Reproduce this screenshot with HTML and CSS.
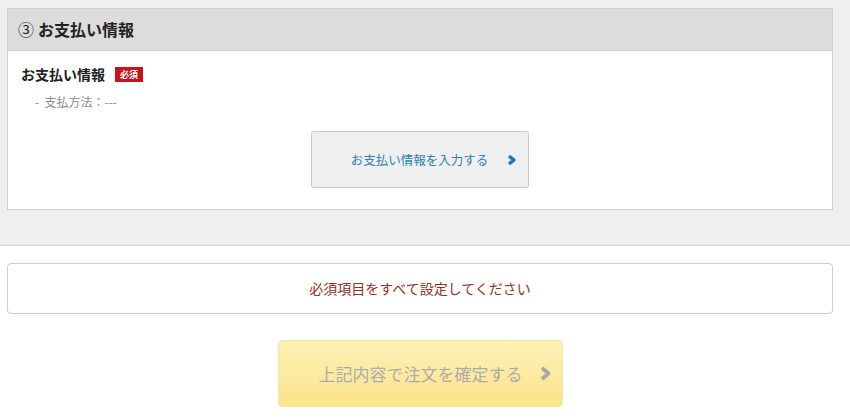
FILE: index.html
```html
<!DOCTYPE html>
<html lang="ja">
<head>
    <meta charset="UTF-8">
    <title>お支払い情報</title>
    <link rel="stylesheet" href="styles.css">
</head>
<body>
    <div class="section">
        <div class="wrap card">
            <div class="card-head"><span class="num">③</span>お支払い情報</div>
            <div class="card-body">
                <div class="label-row">
                    <span class="label">お支払い情報</span>
                    <span class="badge">必須</span>
                </div>
                <p class="detail">-&nbsp; 支払方法：---</p>
                <div class="center">
                    <button type="button" class="pay-btn">
                        お支払い情報を入力する
                        <svg class="chev" width="10" height="12" viewBox="0 0 10 12">
                            <path d="M2 2 L7 6 L2 10" fill="none" stroke="#1f78ad" stroke-width="3.4" stroke-linejoin="round"/>
                        </svg>
                    </button>
                </div>
            </div>
        </div>
    </div>

    <div class="wrap notice">必須項目をすべて設定してください</div>

    <div class="wrap center">
        <button type="button" class="confirm-btn">
            上記内容で注文を確定する
            <svg class="chev-lg" width="12" height="15" viewBox="0 0 12 15">
                <path d="M2 2 L8.5 7.5 L2 13" fill="none" stroke="#a8a8a8" stroke-width="4" stroke-linejoin="round"/>
            </svg>
        </button>
    </div>
</body>
</html>
```

FILE: styles.css
```css
body {
    margin: 0;
    background: #fff;
    font-family: "Noto Sans CJK JP", "Liberation Sans", sans-serif;
    color: #222;
}

.wrap {
    width: 826px;
    margin-left: 7px;
    box-sizing: border-box;
}

.center {
    text-align: center;
}

.section {
    background: #efefef;
    padding: 8px 0 35px;
    border-bottom: 1px solid #d6d6d6;
}

.card {
    background: #fff;
    border: 1px solid #cfcfcf;
}

.card-head {
    background: #dcdcdc;
    height: 41px;
    line-height: 41px;
    padding-left: 10px;
    font-size: 16px;
    font-weight: bold;
    color: #222;
    border-bottom: 1px solid #d2d2d2;
}

.num {
    font-weight: normal;
    margin-right: 4px;
}

.card-body {
    padding: 13px 13px 21px;
}

.label-row {
    display: flex;
    align-items: center;
    height: 20px;
}

.label {
    font-size: 14px;
    font-weight: bold;
}

.badge {
    margin-left: 10px;
    background: #c8111b;
    color: #fff;
    font-size: 9px;
    font-weight: bold;
    line-height: 15px;
    padding: 0 5px;
}

.detail {
    margin: 10px 0 0 14px;
    font-size: 12px;
    line-height: 16px;
    color: #8a8a8a;
}

.pay-btn {
    margin-top: 21px;
    width: 218px;
    height: 57px;
    background: #efefef;
    border: 1px solid #cbcbcb;
    border-radius: 3px;
    font-family: inherit;
    font-size: 12.5px;
    color: #2a7fb3;
    padding: 0 0 0 28px;
    display: inline-flex;
    align-items: center;
    justify-content: center;
    gap: 19px;
}

.notice {
    margin-top: 17px;
    height: 51px;
    border: 1px solid #cdcdcd;
    border-radius: 4px;
    font-size: 14px;
    line-height: 49px;
    text-align: center;
    color: #93302a;
}

.confirm-btn {
    margin-top: 26px;
    width: 285px;
    height: 67px;
    border: 1px solid #f6e6a6;
    border-radius: 4px;
    background: linear-gradient(#fdf1b6, #fce38b);
    font-family: inherit;
    font-size: 17px;
    color: #acacac;
    padding: 0 0 0 30px;
    display: inline-flex;
    align-items: center;
    justify-content: center;
    gap: 17px;
}
```
